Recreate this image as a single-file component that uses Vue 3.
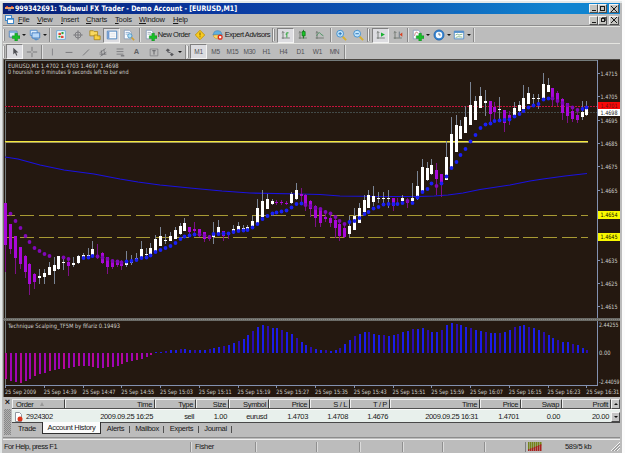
<template>
  <div class="window">
    <header class="titlebar">
      <svg class="app-icon" width="9" height="8" viewBox="0 0 9 8">
        <path d="M0 2h9v2H0z" fill="#e8a068" />
        <path d="M1 1h2v1H1zM6 1h2v1H6z" fill="#d8362c" />
        <path d="M3 4h3v2H3z" fill="#5a6fae" />
      </svg>
      <svg class="title-svg" width="226" height="11">
        <text x="1" y="8.4" textLength="222" lengthAdjust="spacingAndGlyphs">999342691: Tadawul FX Trader - Demo Account - [EURUSD,M1]</text>
      </svg>
      <div class="caption-buttons">
        <span v-for="k in ['min', 'max', 'close']" :key="k" class="cap"><i :class="k"></i></span>
      </div>
    </header>

    <nav class="menubar">
      <svg class="menu-icon" width="10" height="10" viewBox="0 0 10 10">
        <rect x="0.5" y="0.5" width="6" height="5" fill="#e8f4ff" stroke="#3d86c8" />
        <rect x="2.5" y="3.5" width="6" height="5" fill="#fff" stroke="#3d86c8" />
        <path d="M3 4h5v1H3z" fill="#6ab0e8" />
      </svg>
      <span v-for="m in menus" :key="m.label" class="menu" :style="{ width: m.w + 'px' }"><u>{{ m.label[0] }}</u>{{ m.label.slice(1) }}</span>
      <div class="caption-buttons child">
        <span v-for="k in ['min', 'restore', 'close']" :key="k" class="cap"><i :class="k"></i></span>
      </div>
    </nav>

    <div class="toolbar main-bar">
      <div v-for="(t, i) in tools" :key="i" class="tool" :class="[t.k, { pressed: t.on }]" :style="{ width: t.w + 'px' }">
        <svg v-if="t.icon" width="14" height="14" viewBox="0 0 14 14">
          <template v-for="(s, j) in icons[t.icon]" :key="j">
            <path :d="s[0]" :fill="s[1]" :stroke="s[2] || 'none'" :stroke-width="s[3] || 1" />
          </template>
        </svg>
        <i v-if="t.drop" class="drop"></i>
        <span v-if="t.text">{{ t.text }}</span>
      </div>
    </div>

    <div class="toolbar line-bar">
      <div v-for="(t, i) in lineTools" :key="i" class="tool" :class="[t.k, { pressed: t.on }]" :style="{ width: t.w + 'px' }">
        <svg v-if="t.icon" width="14" height="14" viewBox="0 0 14 14">
          <template v-for="(s, j) in icons[t.icon]" :key="j">
            <path :d="s[0]" :fill="s[1]" :stroke="s[2] || 'none'" :stroke-width="s[3] || 1" />
          </template>
        </svg>
        <i v-if="t.drop" class="drop"></i>
        <span v-if="t.text">{{ t.text }}</span>
      </div>
    </div>

    <svg class="chart" width="617" height="338" viewBox="3 59 617 338" shape-rendering="crispEdges">
      <rect x="3" y="59" width="617" height="338" fill="#241810" />
      <path d="M3 59.5H620" stroke="#4a4642" />
      <path d="M3.5 59V397" stroke="#77776f" />
      <path d="M5.5 385V60.5H597.5" fill="none" stroke="#747c7c" />
      <path d="M597.5 60V385.5H5" fill="none" stroke="#8391b0" />
      <rect x="3" y="318" width="617" height="3" fill="#6a6a66" />
      <path d="M3 319.5H620" stroke="#8a8a84" stroke-dasharray="1 1" />

      <!-- levels -->
      <path d="M5 106.5H597" stroke="#c4143c" stroke-dasharray="2 1" />
      <path d="M5 112.5H597" stroke="#434a48" stroke-dasharray="2 1" />
      <path d="M5 141.5H588" stroke="#f4e83c" />
      <path d="M5 142.5H588" stroke="#9c955c" />
      <path v-for="y in [215.5, 237.5]" :key="y" :d="`M5 ${y}H588`" stroke="#a89a34" stroke-dasharray="14.6 4.77" stroke-dashoffset="4.7" />

      <polyline :points="maLine" fill="none" stroke="#1a12e0" stroke-width="1.2" shape-rendering="auto" />

      <!-- candles -->
      <g v-for="(c, i) in candles" :key="'c' + i">
        <rect :x="barX(i)" :y="c[1]" width="1" :height="c[4] - c[1]" :fill="c[0] ? '#7a8494' : '#7c1088'" />
        <rect :x="barX(i) - 1" :y="c[2]" width="3" :height="c[3] - c[2]" :fill="c[0] ? '#ffffff' : '#a808d8'" />
      </g>
      <g shape-rendering="auto">
        <circle v-for="d in dots" :key="'d' + d.i" :cx="barX(d.i) + 0.5" :cy="d.y" r="1.9" :fill="d.up ? '#1a20f4' : '#8008b8'" />
      </g>

      <!-- histogram -->
      <rect
        v-for="(v, i) in histogram"
        :key="'h' + i"
        :x="barX(i)"
        :y="Math.min(v, 353)"
        :width="2"
        :height="Math.abs(353 - v)"
        :fill="i < 31 ? (i % 3 ? '#a004b4' : '#b4089c') : (i % 3 ? '#1c1ce8' : '#2a0cb0')"
      />

      <!-- axis -->
      <path v-for="p in priceLabels" :key="'t' + p.y" :d="`M598 ${p.y}h2`" stroke="#8391b0" />
      <path v-for="(t, i) in times" :key="'tt' + i" :d="`M${5.5 + Math.round(i * 38.75)} 386v2`" stroke="#8391b0" />
      <g class="axis-text">
        <text v-for="p in priceLabels" :key="'p' + p.y" x="600.5" :y="p.y + 2.3" textLength="17" lengthAdjust="spacingAndGlyphs">{{ p.t }}</text>
        <text x="599" y="326.5" textLength="19.5" lengthAdjust="spacingAndGlyphs">2.44255</text>
        <text x="599" y="355.2" textLength="11.5" lengthAdjust="spacingAndGlyphs">0.00</text>
        <text x="599" y="383.8" textLength="20.5" lengthAdjust="spacingAndGlyphs">-2.44059</text>
        <text v-for="(t, i) in times" :key="'x' + i" :x="5 + i * 38.75" y="393.6" :textLength="i ? 33 : 31" lengthAdjust="spacingAndGlyphs">25 Sep {{ t }}</text>
        <text x="8" y="68.4" textLength="110.5" lengthAdjust="spacingAndGlyphs" xml:space="preserve">EURUSD,M1  1.4702 1.4703 1.4697 1.4698</text>
        <text x="8" y="74.4" textLength="120.5" lengthAdjust="spacingAndGlyphs">0 hoursish or 0 minutes 9 seconds left to bar end</text>
        <text x="8" y="328.4" textLength="112" lengthAdjust="spacingAndGlyphs">Technique Scalping_TF5M by fifariz 0.19493</text>
      </g>
      <g class="tags">
        <g v-for="t in tags" :key="t.t">
          <rect x="598" :y="t.y" width="22" :height="t.h" :fill="t.bg" />
          <text x="600.5" :y="t.y + t.h / 2 + 2.3" :fill="t.fg" textLength="17" lengthAdjust="spacingAndGlyphs">{{ t.t }}</text>
        </g>
      </g>
    </svg>

    <section class="terminal">
      <div class="side"><b>×</b><i></i></div>
      <div class="terminal-body">
        <div class="head grid">
          <span v-for="(h, i) in columns" :key="i">{{ h }}<i v-if="i === 0" class="sort"></i></span>
          <b class="scroll up"></b>
        </div>
        <div class="row grid">
          <span v-for="(v, i) in order" :key="i">
            <svg v-if="i === 0" width="9" height="10" viewBox="0 0 9 10">
              <path d="M1.5 0.5h4l2 2v7h-6z" fill="#fff" stroke="#9098a0" />
              <circle cx="6" cy="7" r="2.5" fill="#dc3418" />
            </svg>{{ v }}
          </span>
          <b class="scroll down"></b>
        </div>
        <div class="tabs">
          <span v-for="t in tabs" :key="t.t" :class="{ active: t.on }" :style="{ width: t.w + 'px' }">{{ t.t }}</span>
        </div>
      </div>
    </section>

    <footer class="status">
      <span class="help">For Help, press F1</span>
      <span class="profile">Fisher</span>
      <span v-for="(w, i) in [61, 43, 43, 40, 42, 41]" :key="i" class="cell" :style="{ width: w + 'px' }"></span>
      <span class="net">
        <svg width="15" height="9" viewBox="0 0 15 9">
          <template v-for="n in 7" :key="n">
            <rect :x="n * 2 - 2" y="0" width="1.5" :height="9 - n * 0.8" fill="#738418" />
            <rect :x="n * 2 - 2" :y="8 - n * 0.8" width="1.5" :height="1 + n * 0.8" fill="#a8201c" />
          </template>
        </svg>
        <em>589/5 kb</em>
      </span>
      <svg class="grip-corner" width="9" height="9"><path d="M0 9L9 0M3 9L9 3M6 9L9 6" stroke="#f4f4f4" /><path d="M1.5 9L9 1.5M4.5 9L9 4.5" stroke="#888" /></svg>
    </footer>
  </div>
</template>

<script setup>
const menus = [
  { label: 'File', w: 19 },
  { label: 'View', w: 24 },
  { label: 'Insert', w: 25 },
  { label: 'Charts', w: 29 },
  { label: 'Tools', w: 24 },
  { label: 'Window', w: 34 },
  { label: 'Help', w: 20 },
];

// each shape: [path, fill, stroke, stroke width]
const plus = ['M8 5h3v3h3v3h-3v3h-3v-3h-3v-3h3z', '#18c028', '#087818', 0.5];
const page = ['M1.5 1.5h6l2 2v8h-8z', '#fafcff', '#7890b0', 0.8];
const axes = ['M3.5 3v8.5M2 4.5l1.5-1.5L5 4.5M2 10.5h9.5', 'none', '#606860', 0.9];

const icons = {
  newChart: [['M1.5 2.5h9v7h-9z', '#dce8f8', '#4a7cb8', 1], ['M2 3h8v1.5H2z', '#7ab0e0'], plus],
  profiles: [['M1.5 1.5h8v6h-8z', '#dcecfc', '#4c8cd0', 1], ['M3.5 4.5h9v6h-9z', '#b8d8f8', '#3c78c0', 1], ['M3 10l9 2-4 1.5z', '#5890c8']],
  market: [['M2 2h10v10H2z', '#fcfffc', '#60a0d8', 1], ['M4 4.5h3v2.5H4zM7 8h3v2.5H7z', '#e04838'], ['M7.5 3.5h2.5V6H7.5zM4 8h2.5v2H4z', '#30a040']],
  cross: [['M7 1.5v11M1.5 7h11M7 3.5A3.5 3.5 0 1 1 7 10.5A3.5 3.5 0 1 1 7 3.5', 'none', '#747478', 1]],
  navigator: [['M1 2h4l1 1h4v5H1z', '#f8d860', '#a07808', 0.8], ['M6 7h3l1 1h3v4.5H6z', '#f8d040', '#a07808', 0.8]],
  terminal: [['M1.5 2.5h11v9h-11z', '#fff', '#3c78b8', 1], ['M2 3h2v8H2z', '#7098d0'], ['M5 5h6M5 7h6M5 9h6', 'none', '#c4ccd8', 0.6]],
  tester: [page, ['M3 4h5M3 6h5', 'none', '#88a8d0', 1], ['M8 5.5a2.5 2.5 0 1 1 0 5a2.5 2.5 0 1 1 0-5', '#b0e0f8', '#4890c0', 1], ['M10 10l3 3', 'none', '#d0a030', 1.8]],
  order: [page, ['M3 4h4M3 6h5', 'none', '#8898a8', 0.8], plus],
  alert: [['M7 1.5l5.5 5.5L7 12.5 1.5 7z', '#f8cc20', '#c09000', 1], ['M6.4 4h1.2v3.5H6.400zM6.400 8.500h1.200v1.200H6.400z', '#806000']],
  expert: [['M2 5C2 1 11 1 11 5L12 7H1z', '#60b0e0', '#3078b0', 0.6], ['M2 7h8v2c-2 3-6 3-8 0z', '#f8d868', '#b88820', 0.6], ['M9.500 6.500a3 3 0 1 1 0 6a3 3 0 1 1 0-6', '#e02c18'], ['M8.300 8.300h2.500v2.500H8.300z', '#fff']],
  bars: [axes, ['M8 4v6M6.5 6H8M8 4.5h2', 'none', '#18a028', 1]],
  candle: [axes, ['M7.500 1v10', 'none', '#087010', 1], ['M6 3h3.500v5H6z', '#18c828', '#087010', 0.8]],
  line: [axes, ['M3 8C6 3 7 4 8 6L11 8', 'none', '#40905a', 1]],
  zoomIn: [['M9 9l4 4', 'none', '#d8b030', 2.2], ['M6 1.5a4 4 0 1 1 0 8a4 4 0 1 1 0-8', '#c0e4fc', '#3888c8', 1], ['M4 5.5h4M6 3.5v4', 'none', '#1868b0', 1]],
  zoomOut: [['M9 9l4 4', 'none', '#d8b030', 2.2], ['M6 1.5a4 4 0 1 1 0 8a4 4 0 1 1 0-8', '#c0e4fc', '#3888c8', 1], ['M4 5.5h4', 'none', '#1868b0', 1]],
  scroll: [axes, ['M7 4l4.5 2.500-4.500 2.500z', '#18b030']],
  shift: [axes, ['M8.500 3v7', 'none', '#607080', 1], ['M12 4v5L9 6.500z', '#d84020']],
  indicators: [page, ['M3 8c1-5 2-5 4-3', 'none', '#b04040', 0.8], plus],
  clock: [['M7 1a6 6 0 1 1 0 12a6 6 0 1 1 0-12', '#3080d0', '#205898', 0.6], ['M7 3.200a3.800 3.800 0 1 1 0 7.600a3.800 3.800 0 1 1 0-7.600', '#f4faff'], ['M7 4.500v2.500h2', 'none', '#304860', 0.8]],
  template: [['M1.500 2.500h11v9h-11z', '#fff', '#4888c8', 1], ['M1.500 2.500h11v2h-11z', '#4888c8'], ['M3 7l2-1 2 1 4-1M3 10l3-1 5 .5', 'none', '#50985c', 0.8]],
  pointer: [['M5 2v8l2-2 1.500 3.500 1.200-.6L8.300 7.500H11z', '#505054']],
  crosshair: [['M7 1v5M7 8v5M1 7h5M8 7h5', 'none', '#707074', 1]],
  vline: [['M7.500 3v8', 'none', '#808084', 1]],
  hline: [['M3 7.500h8', 'none', '#707074', 1]],
  trend: [['M3.500 11L10.500 4', 'none', '#707074', 1]],
  channel: [['M3 8l7-5M4 12l7-5M5 5l1 6M8 4l1 6M3 9.500h8', 'none', '#68686c', 0.8]],
  fibo: [['M3 3.500h8M3 6.500h8M3 9.500h8', 'none', '#707074', 0.9], ['M8 11.500h4', 'none', '#505054', 1]],
  box: [['M2.500 3.500h9v8h-9z', 'none', '#78787c', 0.8], ['M5 5.500h4M7 5.500v4.500', 'none', '#58585c', 1]],
  arrows: [['M2 5l2.500-2L7 5 4.500 7zM7 10l2-2 2.500 2L9 12z', '#58585c'], ['M4 7l4 1', 'none', '#58585c', 1]],
};

const tools = [
  { k: 'grip', w: 3 },
  { icon: 'newChart', drop: true, w: 21 },
  { icon: 'profiles', drop: true, w: 21 },
  { k: 'sep', w: 4 },
  { icon: 'market', w: 17 },
  { icon: 'cross', w: 17 },
  { icon: 'navigator', w: 17 },
  { icon: 'terminal', on: true, w: 17 },
  { icon: 'tester', w: 18 },
  { k: 'sep', w: 3 },
  { k: 'label', icon: 'order', text: 'New Order', w: 50 },
  { icon: 'alert', w: 17 },
  { k: 'label', icon: 'expert', text: 'Expert Advisors', w: 63 },
  { k: 'sep', w: 2 },
  { k: 'grip', w: 4 },
  { icon: 'bars', on: true, w: 17 },
  { icon: 'candle', w: 17 },
  { icon: 'line', w: 18 },
  { k: 'sep', w: 3 },
  { icon: 'zoomIn', w: 17 },
  { icon: 'zoomOut', w: 17 },
  { k: 'sep', w: 2 },
  { k: 'grip', w: 4 },
  { icon: 'scroll', on: true, w: 17 },
  { icon: 'shift', w: 17 },
  { k: 'sep', w: 4 },
  { icon: 'indicators', drop: true, w: 21 },
  { icon: 'clock', drop: true, w: 21 },
  { icon: 'template', drop: true, w: 20 },
  { k: 'sep', w: 3 },
];

const lineTools = [
  { k: 'grip', w: 3 },
  { icon: 'pointer', on: true, w: 17 },
  { icon: 'crosshair', w: 17 },
  { k: 'sep', w: 3 },
  { icon: 'vline', w: 17 },
  { icon: 'hline', w: 17 },
  { icon: 'trend', w: 17 },
  { icon: 'channel', w: 17 },
  { icon: 'fibo', w: 17 },
  { k: 'letter', text: 'A', w: 17 },
  { icon: 'box', w: 17 },
  { icon: 'arrows', drop: true, w: 22 },
  { k: 'sep', w: 3 },
  { k: 'grip', w: 3 },
  ...['M1', 'M5', 'M15', 'M30', 'H1', 'H4', 'D1', 'W1', 'MN'].map((t) => ({ k: 'period', text: t, on: t === 'M1', w: 17 })),
  { k: 'sep', w: 3 },
];

// [up, high, open/close top, open/close bottom, low]
const candles = [
  [0, 203, 203, 245, 272], [0, 224, 224, 249, 254], [0, 236, 236, 258, 274], [0, 247, 247, 264, 269],
  [0, 255, 256, 272, 278], [0, 263, 264, 284, 295], [0, 273, 274, 282, 289], [1, 269, 276, 278, 284],
  [1, 269, 273, 277, 284], [1, 262, 267, 275, 275], [1, 257, 265, 271, 284], [1, 256, 256, 269, 270],
  [1, 256, 262, 263, 270], [0, 257, 262, 266, 276], [1, 257, 263, 265, 267], [1, 255, 256, 263, 264],
  [1, 253, 255, 258, 259], [1, 248, 255, 257, 259], [1, 241, 249, 256, 257], [0, 244, 255, 257, 259],
  [0, 252, 253, 263, 264], [0, 257, 257, 267, 274], [0, 260, 261, 267, 269], [0, 260, 263, 265, 267],
  [0, 260, 263, 266, 270], [1, 251, 263, 265, 267], [1, 255, 261, 263, 265], [1, 253, 258, 260, 260],
  [1, 241, 249, 258, 259], [1, 248, 254, 255, 259], [1, 243, 248, 255, 256], [1, 235, 239, 251, 251],
  [1, 227, 236, 246, 246], [1, 234, 240, 241, 244], [1, 232, 236, 241, 241], [1, 227, 230, 239, 239],
  [1, 223, 226, 234, 235], [1, 218, 223, 231, 231], [0, 227, 227, 232, 235], [0, 222, 229, 231, 234],
  [0, 229, 229, 236, 237], [0, 232, 232, 239, 242], [0, 235, 237, 239, 241], [1, 222, 235, 237, 244],
  [1, 220, 227, 235, 235], [0, 231, 231, 236, 241], [0, 232, 233, 235, 239], [1, 225, 229, 231, 234],
  [1, 222, 226, 231, 231], [1, 225, 228, 229, 231], [1, 225, 227, 230, 231], [1, 216, 221, 227, 227],
  [1, 199, 208, 223, 223], [1, 190, 201, 217, 217], [1, 194, 199, 209, 209], [1, 199, 201, 204, 205],
  [0, 200, 202, 203, 205], [0, 200, 202, 203, 205], [0, 201, 203, 204, 205], [1, 192, 194, 203, 204],
  [1, 183, 190, 199, 200], [0, 188, 194, 196, 202], [0, 194, 195, 206, 211], [0, 200, 201, 209, 217],
  [0, 205, 206, 218, 227], [0, 209, 209, 223, 227], [0, 210, 217, 219, 222], [0, 212, 218, 223, 227],
  [0, 216, 220, 228, 238], [0, 220, 224, 236, 241], [0, 223, 228, 237, 238], [1, 216, 226, 234, 237],
  [1, 208, 216, 230, 230], [1, 203, 208, 223, 223], [1, 195, 200, 212, 213], [1, 190, 195, 208, 208],
  [1, 186, 196, 202, 206], [1, 192, 198, 199, 203], [1, 192, 198, 199, 203], [1, 190, 198, 199, 208],
  [0, 198, 198, 206, 211], [0, 198, 204, 205, 206], [1, 195, 198, 201, 204], [0, 198, 200, 203, 208],
  [1, 183, 198, 201, 204], [1, 171, 186, 199, 200], [1, 159, 167, 192, 192], [1, 162, 168, 180, 181],
  [1, 159, 165, 174, 175], [0, 163, 170, 179, 195], [0, 174, 174, 184, 197], [1, 141, 157, 180, 180],
  [1, 117, 134, 167, 167], [1, 115, 125, 152, 152], [1, 120, 126, 139, 139], [1, 106, 117, 133, 133],
  [1, 82, 105, 125, 125], [1, 96, 101, 120, 120], [1, 87, 96, 108, 108], [1, 90, 101, 103, 116],
  [0, 101, 101, 114, 123], [0, 102, 107, 112, 119], [1, 97, 109, 110, 120], [0, 110, 110, 123, 132],
  [0, 111, 115, 118, 125], [1, 102, 108, 115, 115], [1, 101, 105, 111, 113], [1, 85, 98, 109, 110],
  [1, 87, 93, 104, 104], [1, 94, 98, 99, 104], [1, 94, 98, 99, 109], [1, 73, 84, 99, 99],
  [1, 78, 85, 92, 92], [0, 88, 88, 100, 106], [0, 91, 93, 101, 106], [0, 98, 99, 113, 120],
  [0, 103, 103, 116, 123], [0, 107, 111, 119, 122], [0, 108, 115, 120, 123], [1, 101, 112, 117, 120],
  [1, 101, 109, 115, 116],
];

const dotLevels = [
  null, 213.7, 221, 228, 236, 242, 248, 251, 254, 256, null, null, 257.5, 259, null, null, 258, 257.5, 256, 256.5,
  257.5, 259, 261, 261.5, 262.5, 261.5, 261, 260, 258, 257.5, 255.5, 252, 250, 248, 246, 243, 239, 236.5, 235.5, 234.5,
  234.5, 235.5, 237, 234, 234, 233.5, 233.5, 232, 231, 230.5, 230, 227.5, 224, 219, 216, 213.5, 212.5, 211.5, 210.5, 207.5,
  204, 203.5, 205, 206, 208, 209, 212, 213.5, 217, 221, 224, 222, 221, 218, 214, 212, 208.5, 207, 204.5, 204,
  204, 204, 203, 201, 203, 197.5, 192, 189, 183.5, 186, 183.5, 176.5, 168, 162, 155, 149, 141.5, 135, 128, 124.5,
  123.5, 121, 120.5, 120, 119.5, 116.5, 114, 111, 107.5, 105.5, 104, 99.5, 98.5, 98.5, 101, 103, 105, 107.5, 110, 109, 107.5,
];

const histogram = [
  379, 381, 382, 383, 381, 379, 376, 374, 373, 371, 370, 369, 369, 368, 367, 366, 366, 366, 367, 368,
  368, 367, 367, 366, 364, 362, 361, 360, 359, 357, 355, 352, 352, 351, 350, 350, 349, 349, 350, 350,
  350, 350, 349, 348, 347, 346, 345, 343, 341, 339, 335, 331, 327, 325, 326, 328, 328, 330, 332, 334,
  338, 342, 345, 347, 349, 350, 350, 351, 350, 348, 344, 340, 336, 334, 332, 332, 334, 335, 335, 336,
  335, 334, 332, 331, 329, 329, 328, 330, 332, 332, 330, 325, 323, 324, 325, 327, 328, 330, 331, 332,
  333, 333, 333, 332, 330, 327, 326, 325, 327, 328, 330, 332, 335, 338, 340, 342, 342, 344, 345, 348, 350,
];

const maLine = '5,157 18,159 40,165 64,170 94,174 120,179 138,182 160,185 190,188 222,191 250,193 300,194 320,194.5 340,196 380,196.5 418,196.5 434,196 448,195 463,193 480,189.5 510,185 530,181 543,179 565,176 587,173.5';

const dots = dotLevels
  .map((y, i) => ({ i, y, up: isUp(i) }))
  .filter((d) => d.y !== null);

function isUp(i) {
  if (i < 16) return false;
  if (i >= 19 && i <= 24) return false;
  if (i >= 40 && i <= 42) return false;
  if (i >= 62 && i <= 70) return false;
  return ![83, 89, 113, 114, 115, 116, 117, 118].includes(i);
}

function barX(i) {
  return Math.round(5.2 + i * 4.843);
}

const priceLabels = [
  { t: '1.4715', y: 73.5 },
  { t: '1.4705', y: 96.5 },
  { t: '1.4695', y: 120.5 },
  { t: '1.4685', y: 143.5 },
  { t: '1.4675', y: 166.5 },
  { t: '1.4665', y: 190.5 },
  { t: '1.4635', y: 260.5 },
  { t: '1.4625', y: 283.5 },
  { t: '1.4615', y: 306.5 },
];

const tags = [
  { t: '1.4701', y: 102, h: 7, bg: '#f80808', fg: '#701010' },
  { t: '1.4698', y: 109, h: 7, bg: '#ffffff', fg: '#202020' },
  { t: '1.4654', y: 211, h: 8, bg: '#f8f800', fg: '#101000' },
  { t: '1.4645', y: 233, h: 8, bg: '#f8f800', fg: '#101000' },
];

const times = ['2009', '14:39', '14:47', '14:55', '15:03', '15:11', '15:19', '15:27', '15:35', '15:43', '15:51', '15:59', '16:07', '16:15', '16:23', '16:31'];

const columns = ['Order', 'Time', 'Type', 'Size', 'Symbol', 'Price', 'S / L', 'T / P', 'Time', 'Price', 'Swap', 'Profit'];
const order = ['2924302', '2009.09.25 16:25', 'sell', '1.00', 'eurusd', '1.4703', '1.4708', '1.4676', '2009.09.25 16:31', '1.4701', '0.00', '20.00'];

const tabs = [
  { t: 'Trade', w: 30 },
  { t: 'Account History', w: 59, on: true },
  { t: 'Alerts', w: 29 },
  { t: 'Mailbox', w: 34 },
  { t: 'Experts', w: 35 },
  { t: 'Journal', w: 33 },
];
</script>

<style>
body {
  background: #fcfcfc;
  overflow: hidden;
}
</style>

<style scoped>
.window {
  box-sizing: border-box;
  width: 622px;
  height: 453px;
  padding: 3px 2px 0 3px;
  background: #bcbcbc;
  border-left: 0;
  border-top: 1px solid #fafafa;
  box-shadow: inset 2px 2px #e4e8e8;
  font-family: "Liberation Sans", Arial, sans-serif;
  font-size: 7.5px;
  line-height: 10px;
  color: #181818;
  white-space: nowrap;
  overflow: hidden;
}

.window i,
.window em {
  font-style: normal;
}

.titlebar {
  display: flex;
  align-items: center;
  height: 11px;
  margin-top: -1px;
  background: linear-gradient(90deg, #082074 0%, #0a38a0 35%, #0c58b4 62%, #1084d0 90%);
}

.app-icon {
  margin-left: 2px;
}

.title-svg,
.chart {
  overflow: visible;
}

.title-svg text {
  font: bold 7.5px "DejaVu Sans", sans-serif;
  fill: #fff;
}

.caption-buttons {
  display: flex;
  margin-left: auto;
  margin-right: 1px;
}

.cap {
  display: flex;
  align-items: center;
  justify-content: center;
  box-sizing: border-box;
  width: 9px;
  height: 9px;
  background: #c4c4c0;
  border: 1px solid;
  border-color: #f4f4f4 #505050 #505050 #f4f4f4;
}

.cap:last-child {
  margin-left: 2px;
  width: 10px;
}

.min {
  width: 4px;
  height: 1px;
  margin-top: 4px;
  background: #181818;
}

.max,
.restore {
  width: 3px;
  height: 3px;
  border: 1px solid #181818;
}

.restore {
  width: 2px;
  height: 2px;
  box-shadow: 1px -1px #505050;
}

.close {
  width: 6px;
  height: 6px;
  background:
    linear-gradient(45deg, transparent 42%, #181818 42%, #181818 58%, transparent 58%),
    linear-gradient(-45deg, transparent 42%, #181818 42%, #181818 58%, transparent 58%);
}

.menubar {
  display: flex;
  align-items: center;
  height: 11px;
  padding-top: 1px;
  box-sizing: border-box;
  border-bottom: 1px solid #8c8c8c;
  height: 12px;
}

.menu-icon {
  margin: 0 3px 0 2px;
}

.menu {
  letter-spacing: -0.15px;
}

.menu u {
  text-decoration-thickness: 1px;
  text-underline-offset: 1px;
}

.toolbar {
  display: flex;
  align-items: center;
  height: 16px;
  border-top: 1px solid #e4e4e0;
  box-sizing: border-box;
}

.main-bar {
  height: 17px;
}

.tool {
  display: flex;
  flex: none;
  align-items: center;
  justify-content: center;
  box-sizing: border-box;
  height: 15px;
}

.label {
  justify-content: space-between;
  padding: 0 1px 0 4px;
  letter-spacing: -0.45px;
}

.tool svg {
  flex: none;
  width: 12px;
  height: 12px;
}

.pressed {
  background: #dcdce0;
  border: 1px solid;
  border-color: #808080 #f4f4f4 #f4f4f4 #808080;
}

.grip {
  height: 12px;
  background: linear-gradient(90deg, #f0f0f0 1px, #909090 1px, #909090 2px, transparent 2px);
}

.sep {
  height: 14px;
  background: linear-gradient(90deg, transparent 1px, #888888 1px, #888888 2px, #e0e0e0 2px, #e0e0e0 3px, transparent 3px);
}

.drop {
  margin-left: 2px;
  border: 2px solid transparent;
  border-top-color: #181818;
  border-bottom: 0;
}

.period {
  font-size: 6.5px;
  letter-spacing: -0.2px;
  color: #505054;
}

.letter {
  font-weight: bold;
  color: #606064;
}

.chart {
  display: block;
}

.chart text {
  font-family: "DejaVu Sans", sans-serif;
  font-size: 6px;
}

.axis-text {
  fill: #d0d0cc;
}

.terminal {
  display: flex;
  height: 41px;
  border-bottom: 1px solid #8c8c8c;
  box-sizing: border-box;
}

.side {
  width: 9px;
  display: flex;
  flex-direction: column;
  align-items: center;
}

.side b {
  height: 12px;
  font-size: 9px;
}

.side i {
  width: 7px;
  height: 26px;
  background: repeating-conic-gradient(#888 0 25%, #b0b0b0 0 50%) 0 0 / 2px 2px;
}

.terminal-body {
  flex: 1;
  padding-top: 2px;
}

.grid {
  display: grid;
  grid-template-columns: 53px 90px 41px 33px 40px 41px 40px 40px 90px 41px 41px 49px 9px;
  text-align: right;
  letter-spacing: -0.35px;
}

.grid span {
  padding-right: 2px;
}

.grid span:first-child {
  display: flex;
  align-items: center;
  padding-left: 4px;
}

.head span {
  height: 10px;
  box-sizing: border-box;
  border-right: 1px solid #404040;
  border-top: 1px solid #f0f0f0;
  border-bottom: 1px solid #505050;
  line-height: 9px;
  box-shadow: inset 1px 0 #f0f0f0;
}

.sort {
  margin-left: 7px;
  border: 2.5px solid transparent;
  border-top: 0;
  border-bottom: 4px solid #989898;
}

.row {
  height: 13px;
  line-height: 14px;
  background: #e8f0ec;
  border-top: 1px solid #fcfcfc;
  box-sizing: border-box;
}

.row svg {
  margin-right: 3px;
  margin-left: -2px;
}

.scroll {
  display: flex;
  align-items: center;
  justify-content: center;
  box-sizing: border-box;
  height: 10px;
  background: #c4c4c4;
  border: 1px solid;
  border-color: #f4f4f4 #484848 #484848 #f4f4f4;
}

.scroll::after {
  content: "";
  border: 2px solid transparent;
}

.up::after {
  border-top: 0;
  border-bottom-color: #101010;
}

.down {
  margin-top: 2px;
}

.down::after {
  border-bottom: 0;
  border-top-color: #101010;
}

.tabs {
  display: flex;
  height: 12px;
  border-top: 1px solid #484848;
  line-height: 11px;
  letter-spacing: -0.3px;
}

.tabs span {
  box-sizing: border-box;
  text-align: center;
  background: linear-gradient(#505050, #505050) right 3px / 1px 7px no-repeat;
}

.tabs span:first-child {
  background: none;
}

.tabs .active {
  margin-top: -1px;
  background: #fcfcfc;
  border: 1px solid #303030;
  border-top: 0;
  height: 12px;
  line-height: 12px;
}

.status {
  display: flex;
  align-items: center;
  height: 13px;
  margin-top: 1px;
  border-top: 1px solid #f0f0f0;
  letter-spacing: -0.3px;
}

.help {
  width: 187px;
  padding-left: 1px;
  box-sizing: border-box;
  letter-spacing: -0.5px;
}

.profile {
  padding-left: 4px;
  width: 65px;
  box-sizing: border-box;
}

.profile,
.cell {
  height: 10px;
  border-left: 1px solid #909090;
  box-shadow: inset 1px 0 #dcdcdc;
}

.cell {
  box-sizing: border-box;
}

.net {
  display: flex;
  align-items: center;
  height: 10px;
  padding-left: 2px;
  border-left: 1px solid #808080;
}

.net em {
  margin-left: 22px;
}

.grip-corner {
  margin-left: auto;
}
</style>
